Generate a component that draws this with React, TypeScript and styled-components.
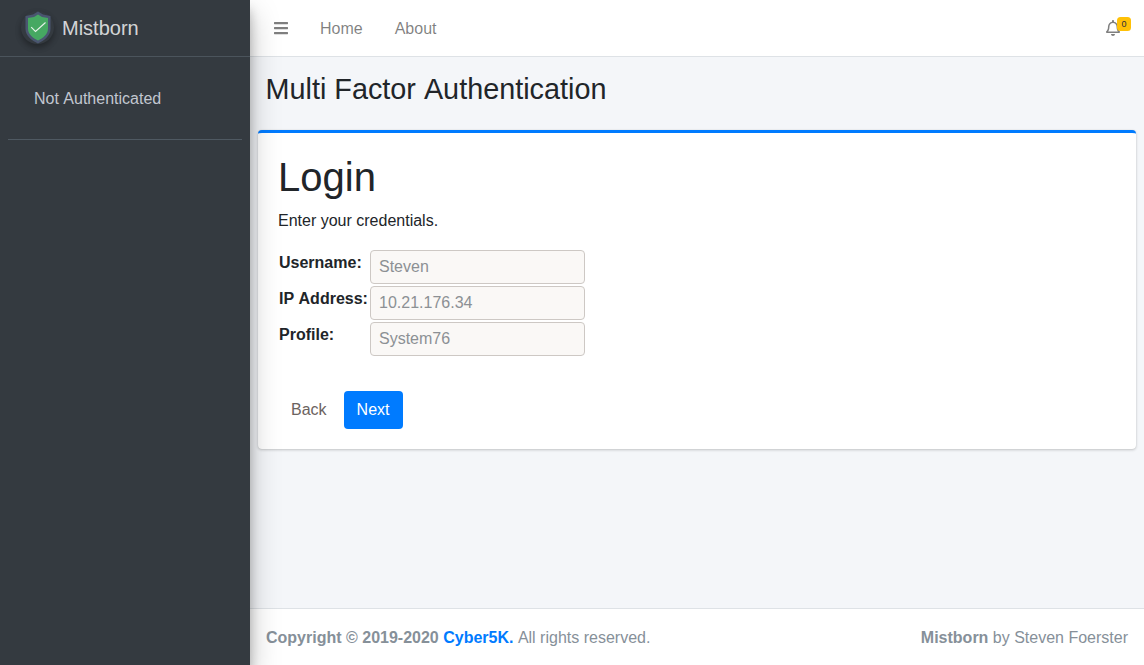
import React from 'react';
import styled, { createGlobalStyle } from 'styled-components';
import { FaBars, FaRegBell } from 'react-icons/fa';

const GlobalStyle = createGlobalStyle`
  * {
    box-sizing: border-box;
  }
  html, body {
    margin: 0;
    height: 100%;
  }
  body {
    font-family: "Liberation Sans", Arial, sans-serif;
    font-size: 16px;
    line-height: 1.5;
    font-kerning: none;
    color: #212529;
    background: #f4f6f9;
  }
`;

const Wrapper = styled.div`
  display: flex;
  height: 665px;
  overflow: hidden;
`;

const Sidebar = styled.aside`
  flex: 0 0 250px;
  background: #343a40;
  box-shadow: 0 14px 28px rgba(0, 0, 0, 0.25), 0 10px 10px rgba(0, 0, 0, 0.22);
  position: relative;
  z-index: 2;
`;

const Brand = styled.a`
  display: flex;
  align-items: center;
  height: 57px;
  padding-left: 21px;
  border-bottom: 1px solid #4b545c;
  color: rgba(255, 255, 255, 0.8);
  font-size: 20px;
  font-weight: 300;
`;

const BrandLogo = styled.div`
  width: 33px;
  height: 33px;
  margin: -2px 8px 0 0;
  border-radius: 50%;
  box-shadow: 0 3px 6px rgba(0, 0, 0, 0.16), 0 3px 6px rgba(0, 0, 0, 0.23);
  display: flex;
  align-items: center;
  justify-content: center;
`;

const UserPanel = styled.div`
  margin: 0 8px;
  height: 83px;
  padding: 30px 0 0 26px;
  border-bottom: 1px solid #4f5962;
  color: #c2c7d0;
`;

const Main = styled.div`
  flex: 1;
  min-width: 0;
  display: flex;
  flex-direction: column;
`;

const Navbar = styled.nav`
  display: flex;
  align-items: center;
  height: 57px;
  flex: none;
  background: #fff;
  border-bottom: 1px solid #dee2e6;
  padding: 0 8px;
`;

const NavLink = styled.a`
  color: rgba(0, 0, 0, 0.5);
  padding: 1px 16px 0;
  display: flex;
  align-items: center;
`;

const ToggleLink = styled(NavLink)`
  padding-top: 0;
`;

const BarsIcon = styled(FaBars)`
  width: 14px;
  height: 16px;
`;

const NavRight = styled.div`
  margin-left: auto;
  padding-right: 16px;
`;

const Bell = styled.div`
  position: relative;
  display: flex;
  width: 14px;
  height: 16px;
  color: rgba(0, 0, 0, 0.5);
`;

const BellIcon = styled(FaRegBell)`
  width: 14px;
  height: 16px;
`;

const Badge = styled.span`
  position: absolute;
  top: -3px;
  right: -11px;
  width: 14px;
  height: 14px;
  border-radius: 3.5px;
  background: #ffc107;
  color: #1f2d3d;
  font-size: 9px;
  font-weight: 300;
  line-height: 14px;
  text-align: center;
`;

const Content = styled.main`
  flex: 1;
  padding: 0 8px;
`;

const PageTitle = styled.h1`
  margin: 0;
  padding: 15px 7.5px 0;
  height: 73px;
  font-size: 28.8px;
  font-weight: 400;
  line-height: 1.2;
`;

const Card = styled.section`
  height: 319px;
  background: #fff;
  border-top: 3px solid #007bff;
  border-radius: 4px;
  box-shadow: 0 0 1px rgba(0, 0, 0, 0.125), 0 1px 3px rgba(0, 0, 0, 0.2);
  padding: 20px;
`;

const CardTitle = styled.h2`
  margin: 0 0 8px;
  font-size: 40px;
  font-weight: 400;
  line-height: 1.2;
`;

const Lead = styled.p`
  margin: 0 0 17px;
  color: #212529;
`;

const Fields = styled.div`
  display: grid;
  grid-template-columns: 91px 215px;
  grid-auto-rows: 36px;
  margin-left: 1px;
`;

const FieldLabel = styled.label`
  font-weight: 700;
  line-height: 24px;
  padding-top: 1px;
`;

const FieldInput = styled.input`
  width: 215px;
  height: 34px;
  padding: 0 8px;
  background: #faf8f6;
  border: 1px solid #cdc8c4;
  border-radius: 4px;
  font: inherit;
  color: #888;
  &::placeholder {
    color: #8c9094;
  }
`;

const Actions = styled.div`
  display: flex;
  gap: 3px;
  margin-top: 33px;
`;

const Button = styled.button<{ $primary?: boolean }>`
  height: 38px;
  padding: 0 14px 0 13px;
  border: 0;
  border-radius: 4px;
  font: inherit;
  color: ${(p) => (p.$primary ? '#fff' : '#6c6360')};
  background: ${(p) => (p.$primary ? '#007bff' : 'transparent')};
`;

const Footer = styled.footer`
  display: flex;
  justify-content: space-between;
  align-items: center;
  height: 57px;
  flex: none;
  background: #fff;
  border-top: 1px solid #dee2e6;
  padding: 1px 16px 0;
  color: #869099;
`;

const Bold = styled.strong`
  font-weight: 700;
`;

const FooterLink = styled.a`
  color: #007bff;
  font-weight: 700;
`;

const ShieldLogo = () => (
  <svg width="28" height="33" viewBox="0 0 28 33">
    <path d="M14 0.5 L19 3.5 L26.5 5 V18 C26.5 25 20 29.5 14 32.5 C8 29.5 1.5 25 1.5 18 V5 L9 3.5 Z" fill="#4a5670" />
    <path d="M14 3.5 L18 6 L24 7 V17.5 C24 23.5 19 27 14 29.5 C9 27 4 23.5 4 17.5 V7 L10 6 Z" fill="#46a862" />
    <path d="M7.2 16.2 L11.5 20.5 L21.5 11.5" fill="none" stroke="#e8f3ea" strokeWidth="1.1" />
  </svg>
);

const App = () => (
  <>
    <GlobalStyle />
    <Wrapper>
      <Sidebar>
        <Brand>
          <BrandLogo>
            <ShieldLogo />
          </BrandLogo>
          Mistborn
        </Brand>
        <UserPanel>Not Authenticated</UserPanel>
      </Sidebar>
      <Main>
        <Navbar>
          <ToggleLink>
            <BarsIcon />
          </ToggleLink>
          <NavLink>Home</NavLink>
          <NavLink>About</NavLink>
          <NavRight>
            <Bell>
              <BellIcon />
              <Badge>0</Badge>
            </Bell>
          </NavRight>
        </Navbar>
        <Content>
          <PageTitle>Multi Factor Authentication</PageTitle>
          <Card>
            <CardTitle>Login</CardTitle>
            <Lead>Enter your credentials.</Lead>
            <Fields>
              <FieldLabel>Username:</FieldLabel>
              <FieldInput placeholder="Steven" readOnly />
              <FieldLabel>IP Address:</FieldLabel>
              <FieldInput placeholder="10.21.176.34" readOnly />
              <FieldLabel>Profile:</FieldLabel>
              <FieldInput placeholder="System76" readOnly />
            </Fields>
            <Actions>
              <Button>Back</Button>
              <Button $primary>Next</Button>
            </Actions>
          </Card>
        </Content>
        <Footer>
          <span>
            <Bold>Copyright © 2019-2020 </Bold>
            <FooterLink>Cyber5K.</FooterLink> All rights reserved.
          </span>
          <span>
            <Bold>Mistborn</Bold> by Steven Foerster
          </span>
        </Footer>
      </Main>
    </Wrapper>
  </>
);

export default App;
